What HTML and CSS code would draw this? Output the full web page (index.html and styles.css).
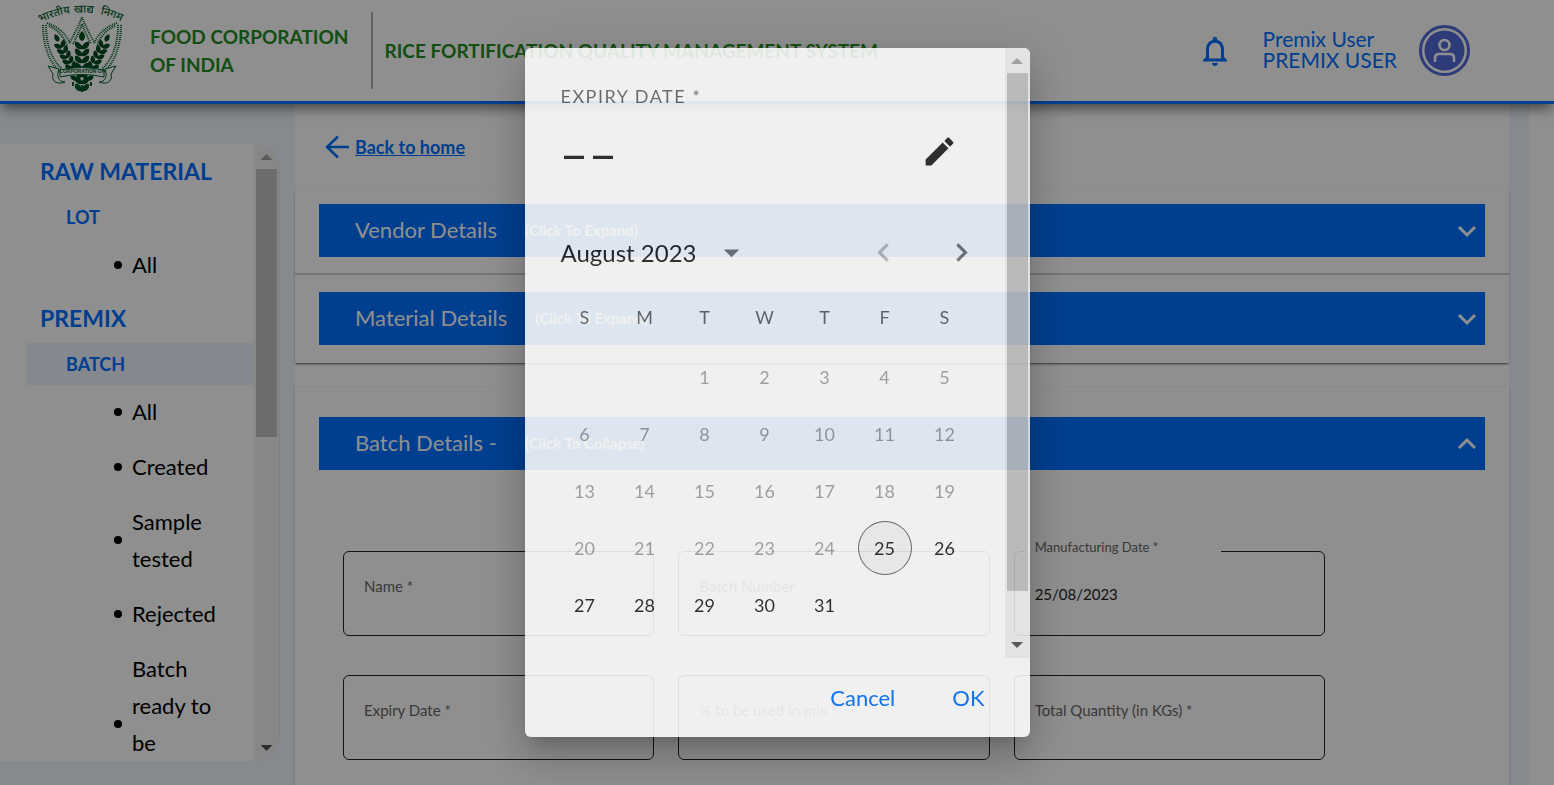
FILE: index.html
```html
<!DOCTYPE html>
<html lang="en">
<head>
<meta charset="utf-8">
<meta name="viewport" content="width=device-width, initial-scale=1">
<title>Rice Fortification Quality Management System</title>
<link rel="stylesheet" href="styles.css">
</head>
<body>
<div class="app">
  <header class="topbar">
    <svg class="logo" viewBox="0 0 90 94" role="img" aria-label="Food Corporation of India emblem">
      <defs>
        <path id="arch" d="M2 23Q45 2 88 23"/>
        <g id="ear">
          <path d="M0 -29c-4 4-4 8 0 10c4-2 4-6 0-10z"/>
          <path id="grain" d="M0 -14C-2-18-6-19-7-18C-8-13-4-10 0-11C4-10 8-13 7-18C6-19 2-18 0-14z"/>
          <use href="#grain" y="7"/><use href="#grain" y="14"/><use href="#grain" y="21"/><use href="#grain" y="28"/><use href="#grain" y="35"/><use href="#grain" y="42"/>
        </g>
      </defs>
      <text class="logo-arch"><textPath href="#arch" startOffset="19%" text-anchor="middle">भारतीय</textPath></text>
      <text class="logo-arch"><textPath href="#arch" startOffset="52%" text-anchor="middle">खाद्य</textPath></text>
      <text class="logo-arch"><textPath href="#arch" startOffset="83%" text-anchor="middle">निगम</textPath></text>
      <g fill="none" stroke="#00602a" stroke-width="2" stroke-dasharray="1 1">
        <path d="M6 25C6 45 12 62 23 72M9 25C9 45 15 60 25 69M12 26C21 30 27 37 30 46M10 23C22 27 30 35 33 44"/>
        <path d="M84 25C84 45 78 62 67 72M81 25C81 45 75 60 65 69M78 26C69 30 63 37 60 46M80 23C68 27 60 35 57 44"/>
        <path d="M33 42C37 34 42 26 45 17C48 26 53 34 57 42M36 44C40 36 43 30 45 24C47 30 50 36 54 44"/>
      </g>
      <g fill="#004a20">
        <use href="#ear" transform="translate(45 60)"/>
        <use href="#ear" transform="translate(29 56) rotate(-27) scale(.8 .85)"/>
        <use href="#ear" transform="translate(61 56) rotate(27) scale(.8 .85)"/>
      </g>
      <path d="M36 82V86M39 84V88M42 85V90M45 85V92M48 85V90M51 84V88M54 82V86" stroke="#00602a" stroke-width="2"/>
      <g fill="#fff" stroke="#00602a" stroke-width="1">
        <path d="M11 66L22 69C19 77 22 82 28 82C21 85 14 82 16 74z"/>
        <path d="M79 66L68 69C71 77 68 82 62 82C69 85 76 82 74 74z"/>
        <path d="M23 70Q45 65 67 70V77Q45 72 23 77z"/>
      </g>
      <text class="logo-ribbon" x="45" y="73" text-anchor="middle">CORPORATION OF</text>
    </svg>
    <div class="brand">FOOD CORPORATION<br>OF INDIA</div>
    <h1 class="system">RICE FORTIFICATION QUALITY MANAGEMENT SYSTEM</h1>
    <button class="bell" type="button" aria-label="Notifications">
      <svg viewBox="0 0 24 24"><path d="M12 22c1.100 0 2-.9 2-2h-4c0 1.100.9 2 2 2zm6-6v-5c0-3.070-1.630-5.640-4.500-6.320V4c0-.83-.67-1.500-1.500-1.500s-1.500.67-1.500 1.500v.68C7.640 5.360 6 7.920 6 11v5l-2 2v1h16v-1l-2-2zm-2 1H8v-6c0-2.480 1.510-4.500 4-4.500s4 2.020 4 4.500v6z"/></svg>
    </button>
    <div class="user">Premix User<br>PREMIX USER</div>
    <svg class="avatar" viewBox="0 0 51 51" role="img" aria-label="User avatar">
      <circle cx="25.500" cy="25.500" r="24" fill="#fff" stroke="#506bd6" stroke-width="3"/>
      <circle cx="25.500" cy="25.500" r="20" fill="#506bd6"/>
      <g fill="none" stroke="#fff" stroke-width="2.600"><circle cx="25.500" cy="20" r="5"/><path d="M16 37V33Q16 29 20 29H31Q35 29 35 33V37"/></g>
    </svg>
  </header>

  <div class="layout">
    <aside class="side">
      <nav class="panel" aria-label="Sections">
        <div class="menu">
          <h2 class="menu-title">RAW MATERIAL</h2>
          <a class="menu-group" href="#lot">LOT</a>
          <ul class="menu-list"><li><a href="#lot-all">All</a></li></ul>
          <h2 class="menu-title">PREMIX</h2>
          <a class="menu-group active" href="#batch">BATCH</a>
          <ul class="menu-list">
            <li><a href="#all">All</a></li>
            <li><a href="#created">Created</a></li>
            <li><a href="#sample">Sample tested</a></li>
            <li><a href="#rejected">Rejected</a></li>
            <li><a href="#ready">Batch ready to be dispatched</a></li>
          </ul>
        </div>
        <div class="scroll" aria-hidden="true"><i class="arrow up"></i><i class="thumb side-thumb"></i><i class="arrow down"></i></div>
      </nav>
    </aside>

    <main class="main">
      <a class="back" href="#home">
        <svg viewBox="0 0 24 24"><path d="M13 1.500L2 12L13 22.500M2 12H24"/></svg>
        <span>Back to home</span>
      </a>
      <div class="accordion">
        <section class="item">
          <button class="bar" type="button" aria-expanded="false"><span class="bar-title">Vendor Details</span><span class="hint">(Click To Expand)</span>
            <svg class="chev" viewBox="0 0 20 20"><path d="M2 6l8 8 8-8"/></svg></button>
        </section>
        <section class="item">
          <button class="bar" type="button" aria-expanded="false"><span class="bar-title">Material Details</span><span class="hint">(Click To Expand)</span>
            <svg class="chev" viewBox="0 0 20 20"><path d="M2 6l8 8 8-8"/></svg></button>
        </section>
      </div>
      <section class="batch">
        <button class="bar" type="button" aria-expanded="true"><span class="bar-title">Batch Details -</span><span class="hint">(Click To Collapse)</span>
          <svg class="chev" viewBox="0 0 20 20"><path d="M2 14l8-8 8 8"/></svg></button>
        <form class="fields">
          <div class="field"><input id="name" type="text"><label for="name">Name *</label></div>
          <div class="field"><input id="number" type="text"><label for="number">Batch Number</label></div>
          <div class="field filled"><input id="mfg" type="text" value="25/08/2023"><label for="mfg">Manufacturing Date *</label></div>
          <div class="field"><input id="expiry" type="text"><label for="expiry">Expiry Date *</label></div>
          <div class="field"><input id="mix" type="text"><label for="mix">% to be used in mix *</label></div>
          <div class="field"><input id="qty" type="text"><label for="qty">Total Quantity (in KGs) *</label></div>
        </form>
      </section>
    </main>
    <div class="gutter"></div>
  </div>
</div>

<div class="backdrop">
  <div class="dialog" role="dialog" aria-modal="true" aria-labelledby="picker-label">
    <div class="dialog-body">
      <div class="picker">
        <div class="overline" id="picker-label">EXPIRY DATE *</div>
        <div class="value-row">
          <span class="value">––</span>
          <button class="icon-btn edit" type="button" aria-label="Edit date"><svg viewBox="0 0 24 24"><path d="M3 17.250V21h3.750L17.810 9.940l-3.750-3.750L3 17.250zM20.710 7.040c.39-.39.39-1.020 0-1.410l-2.340-2.340c-.39-.39-1.020-.39-1.410 0l-1.830 1.830 3.750 3.750 1.830-1.830z"/></svg></button>
        </div>
        <div class="month-row">
          <button class="month" type="button">August 2023 <svg viewBox="0 0 24 24"><path d="M7 10l5 5 5-5z"/></svg></button>
          <button class="icon-btn" type="button" aria-label="Previous month" disabled><svg viewBox="0 0 24 24"><path d="M15.410 16.590L10.830 12l4.580-4.590L14 6l-6 6 6 6 1.410-1.410z"/></svg></button>
          <button class="icon-btn" type="button" aria-label="Next month"><svg viewBox="0 0 24 24"><path d="M8.590 16.590L13.170 12 8.590 7.410 10 6l6 6-6 6-1.410-1.410z"/></svg></button>
        </div>
        <table class="days">
          <thead><tr><th>S</th><th>M</th><th>T</th><th>W</th><th>T</th><th>F</th><th>S</th></tr></thead>
          <tbody>
            <tr><td></td><td></td><td><button disabled>1</button></td><td><button disabled>2</button></td><td><button disabled>3</button></td><td><button disabled>4</button></td><td><button disabled>5</button></td></tr>
            <tr><td><button disabled>6</button></td><td><button disabled>7</button></td><td><button disabled>8</button></td><td><button disabled>9</button></td><td><button disabled>10</button></td><td><button disabled>11</button></td><td><button disabled>12</button></td></tr>
            <tr><td><button disabled>13</button></td><td><button disabled>14</button></td><td><button disabled>15</button></td><td><button disabled>16</button></td><td><button disabled>17</button></td><td><button disabled>18</button></td><td><button disabled>19</button></td></tr>
            <tr><td><button disabled>20</button></td><td><button disabled>21</button></td><td><button disabled>22</button></td><td><button disabled>23</button></td><td><button disabled>24</button></td><td><button class="today">25</button></td><td><button>26</button></td></tr>
            <tr><td><button>27</button></td><td><button>28</button></td><td><button>29</button></td><td><button>30</button></td><td><button>31</button></td><td></td><td></td></tr>
          </tbody>
        </table>
      </div>
      <div class="scroll" aria-hidden="true"><i class="arrow up"></i><i class="thumb dialog-thumb"></i><i class="arrow down"></i></div>
    </div>
    <div class="actions"><button type="button">Cancel</button><button type="button">OK</button></div>
  </div>
</div>
</body>
</html>
```
FILE: styles.css
```css
* { box-sizing: border-box; }
body { margin: 0; font-family: Lato, "Liberation Sans", sans-serif; color: #000; }
button, input { font: inherit; color: inherit; }
button { border: 0; padding: 0; background: none; cursor: pointer; }
a { color: inherit; text-decoration: none; }
h1, h2 { margin: 0; }

.app { height: 100vh; overflow: hidden; display: flex; flex-direction: column; background: #eff6ff; }

.topbar { flex: none; height: 104px; display: flex; align-items: center; padding: 0 84px 0 37px; background: #fff; border-bottom: 3px solid #0070ff; box-shadow: 0 6px 12px -2px rgba(0,0,0,.55); z-index: 1; }
.logo { width: 90px; height: 94px; margin: 0 23px 8px 0; }
.logo-arch { font: 500 11px "Noto Sans Devanagari", "Noto Sans", sans-serif; fill: #00602a; }
.logo-ribbon { font: 700 5px "Liberation Sans", sans-serif; fill: #00602a; }
.brand { font-size: 19px; font-weight: 700; line-height: 28px; color: #228b22; padding-right: 23px; white-space: nowrap; }
.system { font-size: 19px; font-weight: 700; color: #228b22; height: 77px; line-height: 77px; padding-left: 11px; border-left: 2px solid #b0b0b0; white-space: nowrap; }
.bell { margin-left: auto; width: 36px; height: 36px; }
.bell svg { display: block; fill: #0070ff; }
.user { margin: 0 22px 0 30px; padding-bottom: 3px; font-size: 21px; line-height: 21px; color: #0070ff; white-space: nowrap; }
.avatar { width: 51px; height: 51px; }

.layout { flex: 1; min-height: 0; display: flex; }
.side { flex: none; width: 295px; padding: 40px 15px 24px 0; }
.panel { height: 100%; display: flex; overflow: hidden; background: #fff; border-right: 1px solid #dfe3e8; border-radius: 0 25px 25px 0; }
.menu { flex: 1; padding: 2px 0 0 26px; overflow: hidden; }
.menu-title { padding-left: 14px; font-size: 23px; line-height: 50px; font-weight: 700; color: #0070ff; }
.menu-group { display: block; padding-left: 40px; font-size: 18px; line-height: 42px; font-weight: 700; color: #0070ff; }
.menu-group.active { background: #ecf3ff; }
.menu-list { list-style: none; margin: 0; padding: 8px 32px 10px 88px; display: flex; flex-direction: column; gap: 18px; font-size: 22px; line-height: 37px; }
.menu-list li { display: flex; align-items: center; gap: 10px; }
.menu-list li::before { content: ""; flex: none; width: 8px; height: 8px; border-radius: 50%; background: #000; }

.scroll { flex: none; width: 25px; display: flex; flex-direction: column; align-items: center; background: #f1f1f1; }
.arrow { flex: none; width: 12px; height: 6px; background: #a3a3a3; }
.arrow.up { margin: 10px 0 9px; clip-path: polygon(50% 0, 100% 100%, 0 100%); }
.arrow.down { margin: auto 0 10px; background: #505050; clip-path: polygon(0 0, 100% 0, 50% 100%); }
.thumb { width: 21px; background: #c1c1c1; }
.side-thumb { height: 268px; }
.dialog-thumb { height: 518px; }

.main { flex: 1; min-width: 0; display: flex; flex-direction: column; background: #fff; }
.gutter { flex: none; width: 45px; border-right: 25px solid #fff; }
.back { flex: none; display: flex; align-items: center; gap: 6px; height: 83px; padding: 3px 0 0 30px; font-size: 18px; font-weight: 700; color: #0070ff; }
.back span { text-decoration: underline; }
.back svg { width: 24px; height: 24px; fill: none; stroke: #0070ff; stroke-width: 2.500; }
.accordion { flex: none; margin-bottom: 24px; border-radius: 6px 6px 0 0; box-shadow: 0 2px 2px -1px rgba(0,0,0,.5), 0 1px 3px rgba(0,0,0,.2); }
.item { padding: 17px 24px 16px; }
.item + .item { border-top: 2px solid #cfcfcf; padding-bottom: 18px; }
.bar { width: 100%; height: 53px; display: flex; align-items: center; padding: 0 8px 0 36px; background: #0070ff; color: #fff; text-align: left; }
.bar-title { font-size: 22px; margin-right: 28px; padding-bottom: 2px; }
.hint { font-size: 15px; font-weight: 700; padding-bottom: 2px; }
.chev { width: 20px; height: 20px; margin-left: auto; fill: none; stroke: #fff; stroke-width: 3; }
.batch { flex: 1; padding: 30px 24px 0; box-shadow: 0 1px 3px rgba(0,0,0,.2); }
.fields { display: grid; grid-template-columns: repeat(3, 1fr); gap: 39px 24px; padding: 81px 160px 24px 24px; }
.field { position: relative; border: 1px solid #222; border-radius: 6px; }
.field input { display: block; width: 100%; height: 83px; padding: 0 20px; border: 0; background: none; outline: 0; font-size: 15px; color: #222; }
.field label { position: absolute; left: 20px; top: 24px; font-size: 15px; line-height: 20px; color: #666; }
.field.filled label { left: 10px; top: -15px; width: 196px; padding-left: 10px; font-size: 13px; background: #fff; }

.backdrop { position: fixed; inset: 0; z-index: 10; display: flex; justify-content: center; padding: 48px 0; background: rgba(0,0,0,.44); }
.dialog { width: 505px; display: flex; flex-direction: column; overflow: hidden; background: #fff; border-radius: 6px; opacity: .866; box-shadow: 0 11px 15px -7px rgba(0,0,0,.2), 0 24px 38px 3px rgba(0,0,0,.14), 0 9px 46px 8px rgba(0,0,0,.12); }
.dialog-body { flex: 1; min-height: 0; display: flex; }
.picker { flex: 1; padding: 36px 31px 0 30px; overflow: hidden; color: rgba(0,0,0,.87); }
.overline { padding-left: 6px; font-size: 18px; line-height: 24px; letter-spacing: 1.500px; color: rgba(0,0,0,.6); }
.value-row { display: flex; align-items: center; justify-content: space-between; height: 54px; margin-top: 16px; padding: 0 16px 0 5px; }
.value { padding-top: 4px; font-size: 50px; line-height: 50px; }
.icon-btn svg { display: block; width: 37px; height: 37px; fill: currentColor; }
.month-row { display: flex; align-items: center; height: 48px; margin-top: 50px; padding-left: 6px; }
.month { display: flex; align-items: center; gap: 16px; margin-right: auto; font-size: 24px; }
.month svg { width: 37px; height: 37px; fill: rgba(0,0,0,.54); }
.month-row .icon-btn { width: 37px; margin-right: 41px; color: rgba(0,0,0,.54); }
.month-row .icon-btn:last-child { margin-right: -6px; }
.month-row .icon-btn:disabled { color: rgba(0,0,0,.26); }
.days { margin-top: 10px; border-collapse: collapse; table-layout: fixed; width: 420px; font-size: 18px; }
.days th { height: 62px; padding: 0; font-weight: 400; color: rgba(0,0,0,.6); }
.days td { height: 57px; padding: 0; text-align: center; }
.days button { width: 54px; height: 54px; border-radius: 50%; vertical-align: middle; }
.days button:disabled { color: rgba(0,0,0,.38); }
.days .today { border: 1px solid rgba(0,0,0,.6); background: rgba(0,0,0,.04); }
.actions { flex: none; height: 79px; display: flex; align-items: center; justify-content: flex-end; gap: 57px; padding: 0 45px 0 0; font-size: 22px; color: #0070ff; }
```
